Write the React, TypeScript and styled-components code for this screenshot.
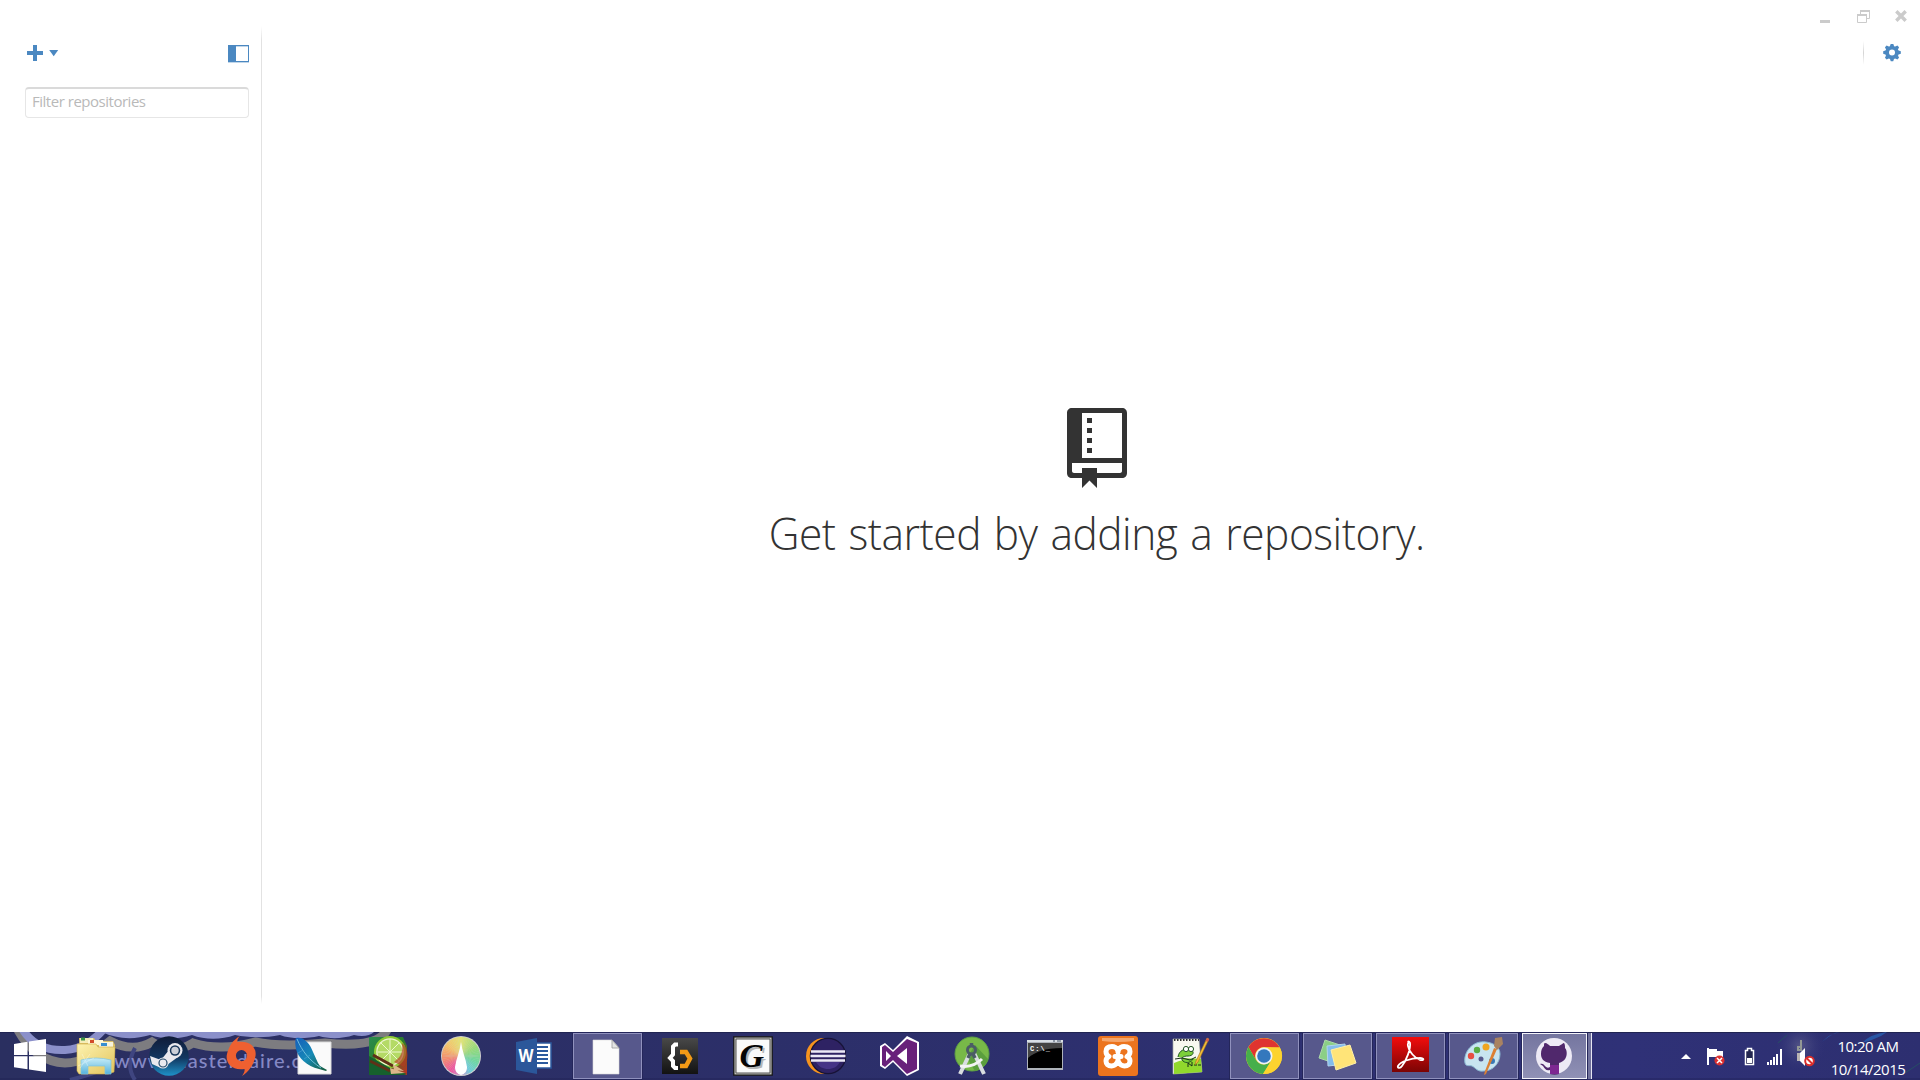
import React from "react";
import styled, { createGlobalStyle, css } from "styled-components";

const GlobalStyle = createGlobalStyle`
  * { box-sizing: border-box; }
  html, body { margin: 0; padding: 0; background: #fff; overflow: hidden; }
  body { font-family: "Open Sans", "Noto Sans", sans-serif; }
  svg { display: block; flex: none; }
`;

const BLUE = "#4b88c1";

const Screen = styled.div`
  width: 1920px;
  height: 1080px;
  display: flex;
  flex-direction: column;
  background: #fff;
  overflow: hidden;
`;
const Window = styled.div`
  flex: 1;
  display: flex;
  min-height: 0;
`;
const Sidebar = styled.aside`
  width: 261px;
  padding: 45px 12px 0 25px;
`;
const Divider = styled.div`
  width: 1px;
  height: 978px;
  margin-top: 26px;
  background: linear-gradient(#fff, #e2e2e2 14px, #e2e2e2 970px, #fff);
`;
const SidebarBar = styled.div`
  display: flex;
  align-items: flex-start;
  justify-content: space-between;
  height: 42px;
`;
const PlainButton = styled.button`
  display: flex;
  padding: 0;
  border: 0;
  background: none;
`;
const AddButton = styled(PlainButton)`
  padding-left: 2px;
`;
const FilterInput = styled.input`
  display: block;
  width: 224px;
  height: 31px;
  padding: 0 6px 4px;
  border: 1px solid #e6e6e6;
  border-top: 2px solid #dadada;
  border-radius: 4px;
  background: #fff;
  font-family: "Open Sans", sans-serif;
  font-size: 15px;
  letter-spacing: -0.48px;
  &::placeholder { color: #b9b9b9; opacity: 1; }
`;
const Content = styled.main`
  flex: 1;
  display: flex;
  flex-direction: column;
`;
const TitleBar = styled.div`
  display: flex;
  justify-content: flex-end;
  gap: 25px;
  height: 40px;
  padding: 10px 13px 0 0;
`;
const MinimizeButton = styled(PlainButton)`
  margin-right: 2px;
`;
const Toolbar = styled.div`
  display: flex;
  justify-content: flex-end;
  align-items: center;
  gap: 19px;
  height: 25px;
  padding-right: 19px;
`;
const ToolDivider = styled.div`
  width: 1px;
  height: 24px;
  background: linear-gradient(#fff, #d4d4d4, #fff);
`;
const EmptyState = styled.section`
  display: flex;
  flex-direction: column;
  align-items: center;
  padding: 343px 0 0 13px;
  margin-right: -12px;
  margin-left: -13px;
`;
const Headline = styled.h1`
  margin: 12px 0 0;
  font-family: "Open Sans", sans-serif;
  font-weight: 300;
  font-size: 45px;
  line-height: 66px;
  letter-spacing: -0.5px;
  word-spacing: 2.5px;
  color: #333;
  white-space: nowrap;
  transform: scaleX(0.943);
`;

const Taskbar = styled.footer`
  position: relative;
  display: flex;
  height: 48px;
  background: linear-gradient(90deg, #2a2f60, #2c2f69 40%, #2f3177 85%, #2d2f70);
  box-shadow: inset 0 1px #202452, inset 0 -2px rgba(25, 25, 70, 0.25);
`;
const Wallpaper = styled.svg`
  position: absolute;
  left: 0;
  top: 0;
`;
const WallpaperText = styled.span`
  position: absolute;
  left: 114px;
  top: 15px;
  font-family: "Lato", sans-serif;
  font-weight: 500;
  font-size: 20px;
  line-height: 26px;
  letter-spacing: 1.1px;
  color: #8589c5;
  white-space: nowrap;
`;
const StartButton = styled(PlainButton)`
  position: relative;
  width: 62px;
  padding: 7px 0 0 14px;
`;
const Tasks = styled.div`
  position: relative;
  display: flex;
  gap: 4px;
  padding-top: 1px;
`;
const Task = styled.button<{ $state?: "open" | "active" }>`
  display: flex;
  align-items: flex-start;
  width: 69px;
  height: 46px;
  padding: 2px 0 0 13px;
  border: 1px solid transparent;
  background: none;
  ${(p) =>
    p.$state === "open" &&
    css`
      border-color: #9091bd;
      background: #57588c;
      box-shadow: 0 0 0 1px #24265a;
    `}
  ${(p) =>
    p.$state === "active" &&
    css`
      width: 65px;
      border-color: #f3f3fa;
      background: linear-gradient(#74759f, #9091b5);
      box-shadow: 0 0 0 1px #24265a, 4px 0 0 0 #70719b, 5px 0 0 0 #e6e6f2;
    `}
`;
const Tray = styled.div`
  position: relative;
  display: flex;
  align-items: flex-start;
  margin-left: auto;
  padding: 15px 0 0;
`;
const TrayIcon = styled.div<{ $gap: number }>`
  margin-right: ${(p) => p.$gap}px;
`;
const Clock = styled.div`
  width: 104px;
  height: 48px;
  margin-top: -15px;
  padding-top: 3px;
  font-family: "Open Sans", sans-serif;
  font-size: 15px;
  line-height: 22.5px;
  letter-spacing: -0.5px;
  text-align: center;
  color: #fff;
`;

const PlusIcon = () => (
  <svg width="32" height="17" viewBox="0 0 32 17" fill={BLUE}>
    <path d="M6 0h4v6h6v4h-6v6H6v-6H0V6h6z" />
    <path d="M22.2 5h9L26.700 11.200z" />
  </svg>
);
const PanelIcon = () => (
  <svg width="21" height="18" viewBox="0 0 21 18">
    <path fill={BLUE} d="M0 0h21v17H0z" />
    <path fill="#fff" d="M8 1h12v15H8z" />
    <path fill="#a6c4e0" d="M0 17h21v1H0zM8 1h12v1H8z" opacity=".7" />
  </svg>
);
const MinimizeIcon = () => (
  <svg width="10" height="14"><path fill="#cbcbcb" d="M0 10h10v3H0z" /></svg>
);
const RestoreIcon = () => (
  <svg width="13" height="13" viewBox="0 0 13 13" fill="none" stroke="#cbcbcb">
    <path d="M3.500 4V1h9v7.500H10" />
    <path d="M3 1h10" strokeWidth="2" />
    <path d="M.5 5.500h9v7h-9z" />
    <path d="M0 5h10" strokeWidth="2" />
  </svg>
);
const CloseIcon = () => (
  <svg width="12" height="12" viewBox="0 0 12 12">
    <path d="M1.300 1.300l9.400 9.400m0-9.400l-9.400 9.400" stroke="#cbcbcb" strokeWidth="3.400" />
  </svg>
);
const GearIcon = () => (
  <svg width="18" height="18" viewBox="-9 -8.500 18 18">
    <g fill={BLUE}>
      {[0, 45, 90, 135].map((a) => (
        <path key={a} transform={`rotate(${a})`} d="M-2.200-6L-1.200-8.800h2.400L2.200-6V6L1.200 8.800h-2.400L-2.200 6z" />
      ))}
      <circle r="6.600" />
    </g>
    <circle r="3" fill="#fff" />
  </svg>
);
const RepoIcon = () => (
  <svg width="60" height="80" viewBox="0 0 12 16">
    <path
      fill="#333"
      fillRule="evenodd"
      d="M1 0h10c.6 0 1 .4 1 1v12c0 .6-.4 1-1 1H6v2L4.500 14.500 3 16v-2H1c-.6 0-1-.4-1-1V1c0-.6.400-1 1-1zM3 1v9h8V1zM1 11v1.600c0 .2.200.4.400.4H3v-1h3v1h4.600c.2 0 .4-.2.400-.4V11zM4 2h1v1H4zM4 4h1v1H4zM4 6h1v1H4zM4 8h1v1H4z"
    />
  </svg>
);

const WindowsLogo = () => (
  <svg width="33" height="34" viewBox="0 0 33 34" fill="#fff">
    <path d="M0 5l13.500-2.200V16H0zM15 2.500L32 0v16H15zM0 17.300h13.500v13L0 28.300zM15 17.300h17V33l-17-2.500z" />
  </svg>
);

const Icon = ({ children }: { children: React.ReactNode }) => (
  <svg width="40" height="40" viewBox="0 0 40 40">{children}</svg>
);

const ExplorerIcon = () => (
  <Icon>
    <defs>
      <linearGradient id="folder" x2="1" y2="1"><stop stopColor="#fdf3b0" /><stop offset="1" stopColor="#e3c45c" /></linearGradient>
      <linearGradient id="stand" x2="0" y2="1"><stop stopColor="#c6ecf8" /><stop offset="1" stopColor="#57b3dc" /></linearGradient>
    </defs>
    <path d="M3 2h15l2 3h17l2 4-1 26-34 2z" fill="#dcc067" />
    <path d="M4 2h13l1 5H4z" fill="#f5edb8" /><path d="M5 1.500h4v3H5z" fill="#3b9447" />
    <path d="M12 4h15l1 5H12z" fill="#fff7d5" /><path d="M14 4h4v3h-4z" fill="#d24b2a" />
    <path d="M23 6h14v6H23z" fill="#f8f4dc" /><path d="M25 7h6v3h-6z" fill="#378fd0" />
    <path d="M1 8h19l2 3h17l-1 25-6 2H3l-2-3z" fill="url(#folder)" stroke="#cfac48" strokeWidth=".6" />
    <path d="M5 24q15-4 30 0v14h-6v-8H12v8H5z" fill="url(#stand)" stroke="#80c4de" strokeWidth=".7" />
    <path d="M2 30l16-8M6 18l6 12M14 18L4 32" stroke="#fff" opacity=".35" />
  </Icon>
);
const SteamIcon = () => (
  <Icon>
    <defs><linearGradient id="steam" x2="0" y2="1"><stop stopColor="#101b38" /><stop offset=".55" stopColor="#123760" /><stop offset="1" stopColor="#1e91c8" /></linearGradient></defs>
    <circle cx="20" cy="20" r="19.700" fill="url(#steam)" />
    <path d="M1 20l11 4 8-10 9 7-11 8-6 3-9-4z" fill="#e9e9ee" />
    <circle cx="26" cy="14.500" r="7.500" fill="#e9e9ee" /><circle cx="26" cy="14.500" r="5.200" fill="#173659" /><circle cx="26" cy="14.500" r="3.700" fill="#ccd0d8" />
    <circle cx="14" cy="27" r="5.600" fill="#e9e9ee" /><circle cx="14" cy="27" r="4" fill="none" stroke="#24496a" strokeWidth="1.200" />
  </Icon>
);
const OriginIcon = () => (
  <Icon>
    <path fill="#ee6030" fillRule="evenodd" d="M18 0c-2 2-3 4-2.500 6C29 4 36 13 33 22c-2 8-7 14-13 18 2-3 3-5 2.500-7C9 35 3 26 5 18 7 10 11 4 18 0zM19.500 14a5.600 5.600 0 100 11.200 5.600 5.600 0 000-11.200z" />
  </Icon>
);
const FeatherIcon = () => (
  <Icon>
    <defs><linearGradient id="feather" x2="1" y2="1"><stop stopColor="#155dbc" /><stop offset=".5" stopColor="#168ab6" /><stop offset="1" stopColor="#175b36" /></linearGradient></defs>
    <path d="M3 6h33v32H3z" fill="#fafafa" stroke="#dadada" />
    <path d="M1 2c7-2 14 5 17 14l5 11 2 3 7 4-1 1-7-2C12 30 3 22 1 13 0 8 0 4 1 2z" fill="url(#feather)" />
    <path d="M2 3c5 12 12 21 24 29" stroke="#7cc6df" fill="none" strokeWidth=".9" />
    <path d="M3 17l5-3m1 9l6-4" stroke="#4fa1d4" strokeWidth=".6" />
  </Icon>
);
const PaintToolIcon = () => (
  <Icon>
    <defs><linearGradient id="sai" x2="1" y2="1"><stop stopColor="#2a8c4e" /><stop offset=".5" stopColor="#2c7c2a" /><stop offset="1" stopColor="#c42d20" /></linearGradient></defs>
    <path d="M1 1h34l4 9v29H1z" fill="url(#sai)" />
    <circle cx="22" cy="16" r="16" fill="#91cc37" /><circle cx="22" cy="16" r="13.800" fill="#eef5d0" /><circle cx="22" cy="16" r="12.500" fill="#b4da66" />
    <path d="M22 3v26M10 16h25M13 7l18 18m0-18L13 25" stroke="#edf7ce" />
    <path d="M34 7c7 5 7 16 2 24l-10-5c7-5 9-9 8-19z" fill="#b43b20" opacity=".65" />
    <path d="M1 20l23 13 15 5-3 1H1z" fill="#16602d" /><path d="M2 25l20 10M5 19l20 11" stroke="#613017" strokeWidth="3" />
    <path d="M22 32l15 5-14 1zM25 28l11 7-10-1z" fill="#dcb68a" />
  </Icon>
);

const WHEEL_STOPS: [number, number[]][] = [
  [0, [226, 228, 120]],
  [60, [152, 218, 120]],
  [110, [110, 214, 160]],
  [150, [108, 204, 220]],
  [180, [200, 150, 205]],
  [215, [238, 84, 158]],
  [260, [243, 140, 110]],
  [310, [245, 196, 104]],
  [360, [226, 228, 120]],
];
const wheelColor = (deg: number) => {
  const i = WHEEL_STOPS.findIndex(([d]) => d > deg);
  const [d0, a] = WHEEL_STOPS[i - 1];
  const [d1, b] = WHEEL_STOPS[i];
  const t = (deg - d0) / (d1 - d0);
  return `rgb(${a.map((v, k) => Math.round(v + (b[k] - v) * t)).join(",")})`;
};
const ColorWheelIcon = () => (
  <Icon>
    <circle cx="20" cy="20" r="20" fill="#cfcfcf" />
    {Array.from({ length: 60 }, (_, i) => (
      <path key={i} d="M20 20L18.900 1h2.200z" fill={wheelColor(i * 6)} transform={`rotate(${i * 6} 20 20)`} />
    ))}
    <path d="M20 6c1 9 5 17 6 25 0 4-2 7-6 8-4-1-6-4-6-8 1-8 5-16 6-25z" fill="#fff" />
  </Icon>
);
const WordGlyph = styled.text`
  font: 700 17px "Open Sans", sans-serif;
  fill: #fff;
`;
const WordIcon = () => (
  <Icon>
    <path d="M21 7h16v25H21z" fill="#fff" stroke="#2c5a9e" strokeWidth="1.500" />
    <path d="M23 11h11M23 15h11M23 19h11M23 23h11M23 27h11" stroke="#2c5a9e" strokeWidth="1.800" />
    <path d="M2 6l21-4v36L2 34z" fill="#2b579a" /><WordGlyph x="4.500" y="26" textLength="15" lengthAdjust="spacingAndGlyphs">W</WordGlyph>
  </Icon>
);
const FileIcon = () => (
  <Icon>
    <path d="M6 4h19l7 8v26H6z" fill="#fbfbfb" stroke="#dadada" strokeWidth=".6" /><path d="M25 4v8h7z" fill="#e4e4e4" stroke="#999" strokeWidth=".8" />
  </Icon>
);
const BracketsIcon = () => (
  <Icon>
    <defs><linearGradient id="code" x2="0" y2="1"><stop stopColor="#484848" /><stop offset="1" stopColor="#121212" /></linearGradient></defs>
    <path d="M2 2h36v36H2z" fill="url(#code)" />
    <path d="M18 8.500h-3l-2 2v8l-3 3.500 3 3v5l2 2h3" stroke="#fff" strokeWidth="4" fill="none" />
    <path d="M20 16h6l4 6.500-4 7.500h-6" stroke="#f39a16" strokeWidth="4.500" fill="none" />
  </Icon>
);
const GLetter = styled.text`
  font: italic 700 34px "Liberation Serif", serif;
`;
const GIcon = () => (
  <Icon>
    <path d="M.8.8h38.400v38.400H.8z" fill="#bdbdb7" stroke="#111" strokeWidth="1.200" /><path d="M3 3h34v34H3z" fill="#fafafa" stroke="#555" />
    <GLetter x="8.500" y="32.500" fill="#b5b5b5">G</GLetter><GLetter x="6.500" y="31" fill="#050505">G</GLetter>
  </Icon>
);
const EclipseIcon = () => (
  <Icon>
    <circle cx="18" cy="20" r="18" fill="#f7941e" /><circle cx="22" cy="20" r="18.300" fill="#171337" /><circle cx="22" cy="20" r="17" fill="#2e2263" />
    <path d="M10 26h24c-3 5-7 7-12 7s-9-2-12-7z" fill="#463486" />
    <path d="M5 15.500h34M4.500 20h35M5 24.500h34" stroke="#ebe9f6" strokeWidth="2.300" />
  </Icon>
);
const VisualStudioIcon = () => (
  <Icon>
    <path d="M1 10l5-3 8 7L28 0l12 6v28l-12 6-14-14-8 7-5-3z" fill="#fff" />
    <path d="M3 11l3-2 8 7L28 3l10 4v26l-10 5-14-14-8 7-3-2z" fill="#68217a" />
    <path d="M7 15v10l5-5zM28 12l-10 8 10 8z" fill="#fff" />
  </Icon>
);
const AndroidStudioIcon = () => (
  <Icon>
    <circle cx="20" cy="18" r="17" fill="#78b948" stroke="#5da044" /><path d="M23 9l13 14c-2 7-7 11-13 12L15 22z" fill="#5b9e3e" />
    <path d="M18 17L8 38M22 17l10 21" stroke="#d9dde0" strokeWidth="4" /><path d="M8 30c6 1 15 0 22-7" stroke="#f3f3f3" strokeWidth="3" fill="none" />
    <circle cx="19.500" cy="14" r="4" fill="none" stroke="#4b5c65" strokeWidth="3" /><path d="M19.500 7v4M18 18l-2 4m5-4l2 4" stroke="#4b5c65" strokeWidth="3.500" />
  </Icon>
);
const PromptGlyph = styled.text`
  font: 700 7px "Liberation Mono", monospace;
  fill: #fff;
`;
const TerminalIcon = () => (
  <Icon>
    <path d="M2 4h36v30H2z" fill="#aeb3ba" /><path d="M3 7h34v25H3z" fill="#000" /><path d="M3 7h34v5C20 12 10 16 3 22z" fill="#444" />
    <path d="M2 4h36v2H2z" fill="#d9dfe5" /><path d="M28 5h2m2 0h4" stroke="#425067" />
    <PromptGlyph x="5" y="15" textLength="20">C:\_</PromptGlyph>
  </Icon>
);
const XamppIcon = () => (
  <Icon>
    <rect width="40" height="40" rx="3" fill="#ec741e" /><path d="M4 2h32v3q-16 2-32 0z" fill="#f5a66c" />
    <g fill="none" stroke="#fff" strokeWidth="5" strokeLinejoin="round" strokeLinecap="round">
      <path d="M20 14c-2-3-4-3.500-6-3.500-4 0-6 2-6 5 0 2.500 1 4 3 5-2 1-3 2.500-3 4.500 0 3 2 5 5.500 5 3 0 5-2 6.500-4.500 1.500 2.500 3.500 4.500 6.500 4.500 3.500 0 5.500-2 5.500-5 0-2-1-3.500-3-4.500 2-1 3-2.500 3-5 0-3-2-5-6-5-2 0-4 .5-6 3.500z" />
      <path d="M17 20.500h6M20 14v2m0 7v3" />
    </g>
  </Icon>
);
const NotepadIcon = () => (
  <Icon>
    <path d="M2 3h26l3 33-29 2z" fill="#f7f8ef" stroke="#a3a9a0" strokeWidth=".7" /><path d="M3 27q14-6 27-4l1 13-28 2z" fill="#91d82d" />
    <path d="M3 4h25" stroke="#333" strokeWidth="2" strokeDasharray="1.500 1.500" />
    <path d="M7 21c1-7 7-9 13-7 4 2 2 6-3 6s-8 2-5 5 9 1 10-2" fill="#7bcf39" stroke="#225525" />
    <circle cx="15" cy="13" r="2.600" fill="#fff" stroke="#225525" /><circle cx="20" cy="13" r="2.600" fill="#fff" stroke="#225525" />
    <path d="M4 23l7-1 8 2 6-3M17 31v-4l4 3v-4m2 3h3m1 0h3" stroke="#172d1a" fill="none" />
    <path d="M36 2l2 1-11 23-3 3 1-4z" fill="#f1bf37" stroke="#a46d20" strokeWidth=".6" /><path d="M36 2l2 1-1 3-2.500-1z" fill="#d65d4f" />
  </Icon>
);
const ChromeIcon = () => (
  <Icon>
    <circle cx="20" cy="20" r="18" fill="#fcd32f" /><path d="M4.400 11A18 18 0 0135.600 11.500L20 11a9 9 0 00-8 13z" fill="#df3430" />
    <path d="M4.400 11A18 18 0 0019 38l8-13a9 9 0 01-15-1z" fill="#46af4b" />
    <path d="M20 11.500h15.800a18 18 0 01-16.800 26.500l9-14z" fill="#fcd32f" />
    <circle cx="20" cy="20" r="8.500" fill="#eef3f8" /><circle cx="20" cy="20" r="6.800" fill="#3478bd" />
  </Icon>
);
const NotesIcon = () => (
  <Icon>
    <path d="M8 4l15 5-6 18L2 22z" fill="#8bcf86" stroke="#abd7a8" /><path d="M10 10l18-2 2 20-19 2z" fill="#84bdec" stroke="#b3d4ed" />
    <path d="M14 14l19-5 6 18-20 7z" fill="#ffe478" stroke="#fff0a7" />
  </Icon>
);
const AcrobatIcon = () => (
  <Icon>
    <defs><linearGradient id="pdf" x2="0" y2="1"><stop stopColor="#f20d0d" /><stop offset="1" stopColor="#7b0404" /></linearGradient></defs>
    <path d="M2 1h37v35H2z" fill="url(#pdf)" />
    <path d="M19 7c-2-2 0-2 1 0 1 6-4 18-8 23-2 3-5 2-4 0 2-4 12-8 22-8 5 0 4 3 0 2-5-2-11-8-12-14-.5-2 0-3 1-3" fill="none" stroke="#fff" strokeWidth="1.800" />
  </Icon>
);
const PaletteIcon = () => (
  <Icon>
    <path d="M23 6C10 4 0 16 2 27c1 4 4 2 7 3 4 2 5 6 12 5 9 0 16-8 16-17 0-7-6-11-14-12z" fill="#c8e4f0" stroke="#8ab9d3" />
    <circle cx="18" cy="23" r="2.500" fill="#57588c" /><circle cx="8" cy="20" r="3.200" fill="#e64e43" /><circle cx="14" cy="14" r="3.200" fill="#59ad45" /><circle cx="23" cy="11" r="3.500" fill="#f0a520" /><circle cx="29" cy="25" r="3" fill="#3879b6" />
    <path d="M34 13l-11 25-2 1 1-4 9-23z" fill="#db8034" /><path d="M31 10l1-8 7-1 1 7-6 6z" fill="#a98261" />
  </Icon>
);
const GitHubIcon = () => (
  <Icon>
    <circle cx="18" cy="20" r="18" fill="#edeaf5" />
    <path d="M8 10c0-2 0-3 1-3 2 0 4 2 5 3h9c2-1 4-3 5-3 1 1 1 3 1 5 3 3 2 11-2 13-1 1-2 1-4 2v11c-3 1-6 1-9 0v-4c-4 1-5-1-7-4-1-1-2-1-3-2 3-1 4 1 5 2 2 2 3 2 5 1v-4c-7-1-9-5-9-9 0-4 1-6 3-8z" fill="#50286c" />
    <path d="M14 29h9v9h-9z" fill="#7d2891" />
  </Icon>
);

const tasks: { name: string; icon: React.ReactNode; state?: "open" | "active" }[] = [
  { name: "File Explorer", icon: <ExplorerIcon /> },
  { name: "Steam", icon: <SteamIcon /> },
  { name: "Origin", icon: <OriginIcon /> },
  { name: "Photoshop", icon: <FeatherIcon /> },
  { name: "Paint Tool", icon: <PaintToolIcon /> },
  { name: "Color Wheel", icon: <ColorWheelIcon /> },
  { name: "Word", icon: <WordIcon /> },
  { name: "Document", icon: <FileIcon />, state: "open" },
  { name: "Code Editor", icon: <BracketsIcon /> },
  { name: "G", icon: <GIcon /> },
  { name: "Eclipse", icon: <EclipseIcon /> },
  { name: "Visual Studio", icon: <VisualStudioIcon /> },
  { name: "Android Studio", icon: <AndroidStudioIcon /> },
  { name: "Command Prompt", icon: <TerminalIcon /> },
  { name: "XAMPP", icon: <XamppIcon /> },
  { name: "Notepad++", icon: <NotepadIcon /> },
  { name: "Chrome", icon: <ChromeIcon />, state: "open" },
  { name: "Sticky Notes", icon: <NotesIcon />, state: "open" },
  { name: "Acrobat", icon: <AcrobatIcon />, state: "open" },
  { name: "Paint", icon: <PaletteIcon />, state: "open" },
  { name: "GitHub", icon: <GitHubIcon />, state: "active" },
];

const WallpaperStrip = () => (
  <Wallpaper width="1920" height="48" viewBox="0 0 1920 48" fill="none">
    <path d="M18-2C28 16 42 30 65 31c20 0 32-12 45-22 15 8 30 8 42 1 14 9 28 9 41 1 20 6 38 5 62-1 20 4 40 4 70 1 30 3 55 1 62-13" stroke="#7d7c80" strokeWidth="9" />
    <path d="M23-2c9 14 22 21 42 20 17-1 28-9 38-20" stroke="#8b90ca" strokeWidth="8" />
    <path d="M102 0h272c-4 4-12 5-20 3-12 4-25 4-35 1-13 3-29 3-39-1-15 3-29 3-45 0-14 5-30 5-43 0-15 5-30 4-42 0-16 5-34 4-48-3z" fill="#8b90ca" />
    <path d="M70 48c20-5 35-10 47-18M135 16c-6 11-7 22 0 32" stroke="#3f4580" strokeWidth="4" />
    <circle cx="1800" cy="14" r="25" fill="url(#glow)" />
    <defs><radialGradient id="glow"><stop stopColor="#77799a" stopOpacity=".5" /><stop offset="1" stopColor="#34367b" stopOpacity="0" /></radialGradient></defs>
    <path d="M1822 10q7-8 18-10l-5 1q-6 3-13 9zM1862 11q8-9 25-11l-6 4q-8 4-19 7z" fill="#2856a5" />
    <path d="M1778 11l9-8M1905 41l15-10" stroke="#264f65" />
    <path d="M1801 8v6m-3 1h3v3h-3zM1254 1v4h2" stroke="#929895" strokeWidth="2" />
  </Wallpaper>
);

export default function App() {
  return (
    <Screen>
      <GlobalStyle />
      <Window>
        <Sidebar>
          <SidebarBar>
            <AddButton aria-label="Add"><PlusIcon /></AddButton>
            <PlainButton aria-label="Toggle sidebar"><PanelIcon /></PlainButton>
          </SidebarBar>
          <FilterInput placeholder="Filter repositories" />
        </Sidebar>
        <Divider />
        <Content>
          <TitleBar>
            <MinimizeButton aria-label="Minimize"><MinimizeIcon /></MinimizeButton>
            <PlainButton aria-label="Restore"><RestoreIcon /></PlainButton>
            <PlainButton aria-label="Close"><CloseIcon /></PlainButton>
          </TitleBar>
          <Toolbar>
            <ToolDivider />
            <PlainButton aria-label="Settings"><GearIcon /></PlainButton>
          </Toolbar>
          <EmptyState>
            <RepoIcon />
            <Headline>Get started by adding a repository.</Headline>
          </EmptyState>
        </Content>
      </Window>
      <Taskbar>
        <WallpaperStrip />
        <WallpaperText>www.masterdaire.c</WallpaperText>
        <StartButton aria-label="Start"><WindowsLogo /></StartButton>
        <Tasks>
          {tasks.map((t) => (
            <Task key={t.name} aria-label={t.name} $state={t.state}>{t.icon}</Task>
          ))}
        </Tasks>
        <Tray>
          <TrayIcon $gap={15}>
            <svg width="10" height="19"><path d="M0 12l5-5 5 5z" fill="#fff" /></svg>
          </TrayIcon>
          <TrayIcon $gap={19}>
            <svg width="19" height="19" viewBox="0 0 19 19">
              <path d="M1 1h2v17H1zM3 2h8v2h6v8h-7v-2H3z" fill="#fff" />
              <circle cx="13.500" cy="13.500" r="5" fill="#dc3030" /><path d="M11 11l5 5m0-5l-5 5" stroke="#fff" strokeWidth="1.500" />
            </svg>
          </TrayIcon>
          <TrayIcon $gap={12}>
            <svg width="11" height="19"><path d="M1.500 3.500h2v-2h4v2h2v14h-8z" fill="#23264f" stroke="#fff" strokeWidth="1.500" /><path d="M3 11h5v5H3z" fill="#fff" /></svg>
          </TrayIcon>
          <TrayIcon $gap={13}>
            <svg width="16" height="19" fill="#fff"><path d="M0 15h2v3H0zM3 13h2v5H3zM6 10h2v8H6zM9 7h2v11H9zM13 2h2v16h-2z" /></svg>
          </TrayIcon>
          <TrayIcon $gap={0}>
            <svg width="20" height="20" viewBox="0 0 20 20">
              <path d="M1 6h3v8H1z" fill="#b9b4b2" /><path d="M4 6l5-5v18l-5-5z" fill="#fff" />
              <circle cx="13.500" cy="14" r="4.300" fill="#fff" stroke="#d92d2b" strokeWidth="2" /><path d="M10.500 11l6 6" stroke="#d92d2b" strokeWidth="2" />
            </svg>
          </TrayIcon>
          <Clock>
            <div>10:20 AM</div>
            <div>10/14/2015</div>
          </Clock>
        </Tray>
      </Taskbar>
    </Screen>
  );
}
